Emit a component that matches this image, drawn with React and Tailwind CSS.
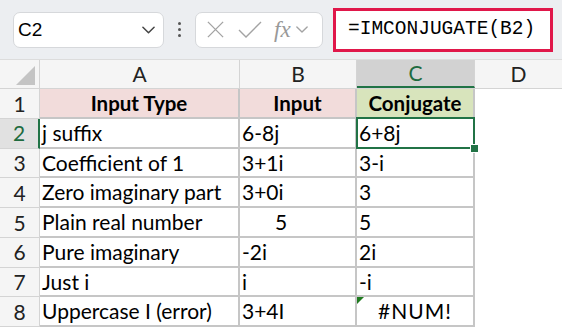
import React from 'react';

// Excel-like sheet: IMCONJUGATE demo
const rows = [
  { a: 'j suffix', b: '6-8j', c: '6+8j' },
  { a: 'Coefficient of 1', b: '3+1i', c: '3-i' },
  { a: 'Zero imaginary part', b: '3+0i', c: '3' },
  { a: 'Plain real number', b: '5', c: '5', bNum: true },
  { a: 'Pure imaginary', b: '-2i', c: '2i' },
  { a: 'Just i', b: 'i', c: '-i' },
  { a: 'Uppercase I (error)', b: '3+4I', c: '#NUM!', err: true },
];

const Chevron = ({ className }) => (
  <svg className={className} viewBox="0 0 14 8" fill="none" stroke="currentColor" strokeWidth="1.6" strokeLinecap="round" strokeLinejoin="round">
    <path d="M1 1l6 6 6-6" />
  </svg>
);

export default function App() {
  return (
    <div className="w-[562px] h-[327px] overflow-hidden bg-white font-['Lato',sans-serif] text-black">
      {/* FORMULA BAR */}
      <div className="h-[60px] bg-[#eceef1] flex items-center border-b border-[#dcdcdc]">
        <div className="ml-[13px] w-[151px] h-[36px] bg-white rounded-[7px] border border-[#d6d8db] flex items-center justify-between pl-[4px] pr-[8px]">
          <span className="font-['Liberation_Sans',sans-serif] text-[19px] leading-none">C2</span>
          <Chevron className="w-[13px] h-[8px] text-[#444]" />
        </div>
        <div className="w-[31px] flex flex-col items-center gap-[3px]">
          <span className="w-[3px] h-[3px] bg-[#555] rounded-full" />
          <span className="w-[3px] h-[3px] bg-[#555] rounded-full" />
          <span className="w-[3px] h-[3px] bg-[#555] rounded-full" />
        </div>
        <div className="w-[128px] h-[36px] bg-white rounded-[7px] border border-[#d6d8db] flex items-center pl-[10px] text-[#a3a3a3]">
          <svg className="w-[19px] h-[19px]" viewBox="0 0 20 20" fill="none" stroke="currentColor" strokeWidth="1.4">
            <path d="M2 2l16 16M18 2L2 18" />
          </svg>
          <svg className="ml-[13px] w-[24px] h-[18px]" viewBox="0 0 24 18" fill="none" stroke="currentColor" strokeWidth="1.4">
            <path d="M1 9l7 7L23 1" />
          </svg>
          <span className="ml-[12px] font-['Liberation_Serif',serif] italic text-[23px] leading-none text-[#999]">fx</span>
          <Chevron className="ml-[5px] w-[12px] h-[7px]" />
        </div>
        <div className="ml-[10px] w-[220px] h-[44px] border-[3px] border-[#e0174a] bg-white flex items-center pl-[12px]">
          <span className="font-['Liberation_Mono',monospace] text-[19.5px] leading-none">=IMCONJUGATE(B2)</span>
        </div>
      </div>

      {/* COLUMN HEADERS */}
      <div className="flex h-[29px] bg-[#f5f5f5] text-[21px] text-[#222] border-b border-[#d4d4d4]">
        <div className="w-[40px] border-r border-[#d4d4d4] flex items-end justify-end pr-[4px] pb-[3px]">
          <div className="w-0 h-0 border-l-[19px] border-l-transparent border-b-[19px] border-b-[#c4c4c4]" />
        </div>
        <div className="w-[200px] border-r border-[#d4d4d4] flex items-center justify-center">A</div>
        <div className="w-[117px] border-r border-[#d4d4d4] flex items-center justify-center">B</div>
        <div className="w-[118px] border-r border-[#d4d4d4] bg-[#d2d2d2] border-b-[2px] border-b-[#217346] text-[#1e6b3f] flex items-center justify-center">C</div>
        <div className="flex-1 flex items-center justify-center">D</div>
      </div>

      {/* ROW 1 */}
      <div className="flex h-[29.75px] text-[20.5px]">
        <div className="w-[40px] bg-[#f5f5f5] border-r border-b border-[#d4d4d4] flex items-center justify-center text-[#222] text-[21px]">1</div>
        <div className="w-[200px] bg-[#f2dcdb] border-r-2 border-b-2 border-[#c6c6c6] flex items-center justify-center font-bold">Input Type</div>
        <div className="w-[117px] bg-[#f2dcdb] border-r-2 border-b-2 border-[#c6c6c6] flex items-center justify-center font-bold">Input</div>
        <div className="w-[118px] bg-[#d8e4bc] border-r-2 border-b-2 border-[#c6c6c6] flex items-center justify-center font-bold">Conjugate</div>
        <div className="flex-1" />
      </div>

      {rows.map((r, i) => {
        const sel = i === 0;
        return (
          <div key={i} className="flex h-[29.75px] text-[21px]">
            <div className={`w-[40px] border-b border-[#d4d4d4] flex items-center justify-center ${sel ? 'bg-[#e1e1e1] text-[#1e6b3f] border-r-2 border-r-[#217346]' : 'bg-[#f5f5f5] text-[#222] border-r border-r-[#d4d4d4]'}`}>{i + 2}</div>
            <div className="w-[200px] border-r-2 border-b-2 border-[#c6c6c6] flex items-center pl-[2px] whitespace-nowrap">{r.a}</div>
            <div className={`w-[117px] border-r-2 border-b-2 border-[#c6c6c6] flex items-center whitespace-nowrap ${r.bNum ? 'pl-[35px]' : 'pl-[2px]'}`}>{r.b}</div>
            <div className={`relative w-[118px] border-r-2 border-b-2 border-[#c6c6c6] flex items-center whitespace-nowrap ${r.err ? 'justify-center tracking-[1px]' : 'pl-[2px]'}`}>
              {r.c}
              {r.err && <div className="absolute left-0 top-0 w-0 h-0 border-t-[7px] border-t-[#1f7a1f] border-r-[7px] border-r-transparent" />}
              {sel && (
                <>
                  <div className="absolute z-10 left-[-1px] top-[-2px] right-[-2px] bottom-[-2px] border-[2px] border-[#217346]" />
                  <div className="absolute z-20 right-[-6px] bottom-[-6px] w-[9px] h-[9px] bg-[#217346] border-[1.5px] border-white" />
                </>
              )}
            </div>
            <div className="flex-1" />
          </div>
        );
      })}
    </div>
  );
}
